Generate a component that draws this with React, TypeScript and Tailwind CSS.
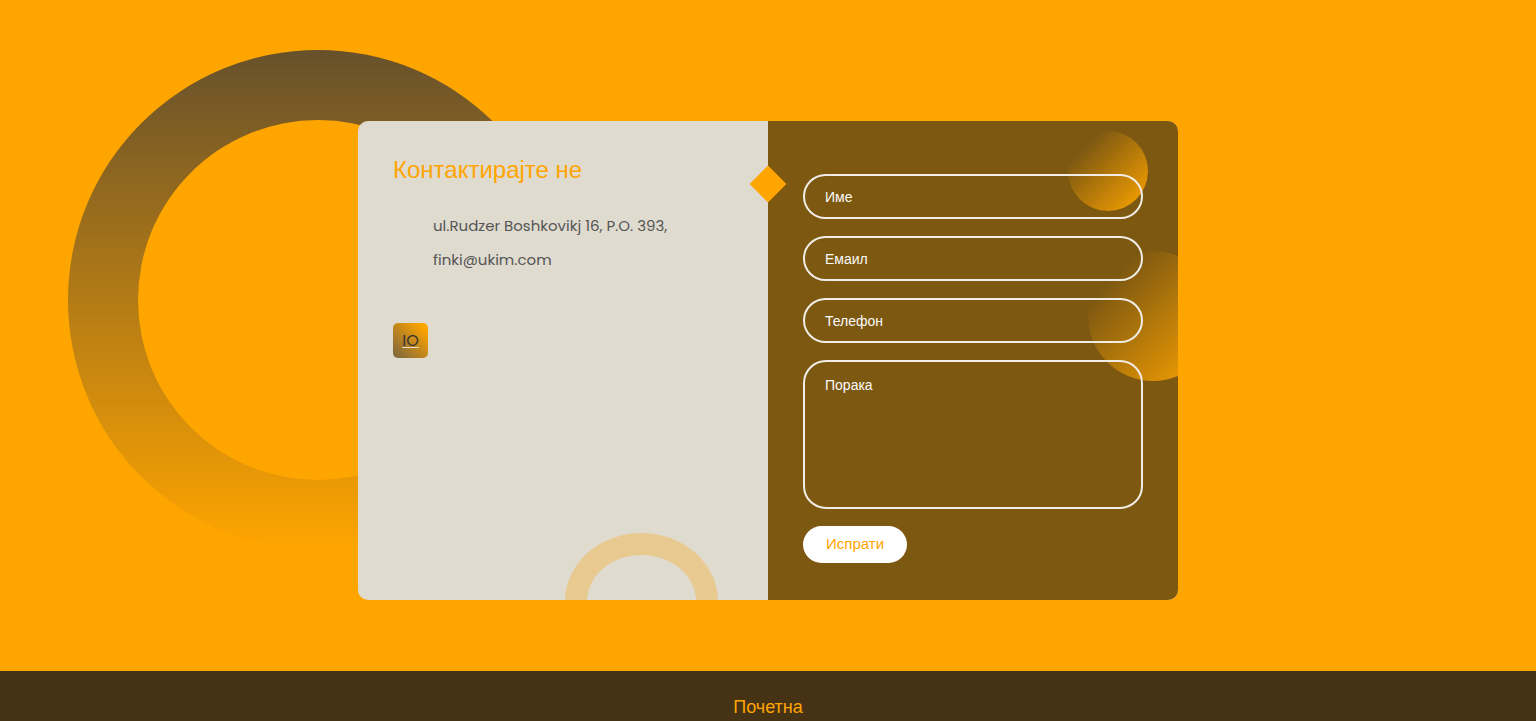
import type { ReactNode } from 'react';

const fieldClass =
  "peer block w-full rounded-[23px] border-2 border-[#f1ede6] bg-transparent px-5 font-['Liberation_Sans',sans-serif] text-sm text-white outline-none";

const labelClass =
  "pointer-events-none absolute left-[22px] font-['Liberation_Sans',sans-serif] text-sm leading-5 text-[#fafafa] peer-focus:opacity-0 peer-not-placeholder-shown:opacity-0";

function Field({ id, label, type }: { id: string; label: string; type: string }) {
  return (
    <div className="relative flex items-center">
      <input id={id} name={id} type={type} placeholder=" " className={`${fieldClass} h-[45px]`} />
      <label htmlFor={id} className={labelClass}>{label}</label>
    </div>
  );
}

function InfoLine({ children }: { children: ReactNode }) {
  return <p className="pl-10 text-[15px] leading-[34px] text-[#555]">{children}</p>;
}

function ContactInfo() {
  return (
    <section className="relative overflow-hidden px-[35px] pt-8">
      <div className="absolute -bottom-[70px] right-[50px] h-[137px] w-[153px] rounded-[50%] border-[22px] border-[#e8ca91]" />
      <h1 className="font-['Liberation_Sans',sans-serif] text-2xl leading-[34px] text-[#ffa500]">
        Контактирајте не
      </h1>
      <div className="mt-[22px]">
        <InfoLine>ul.Rudzer Boshkovikj 16, P.O. 393,</InfoLine>
        <InfoLine>finki@ukim.com</InfoLine>
      </div>
      <a
        href="#io"
        className="mt-[46px] flex size-[35px] items-center justify-center rounded-[5px] bg-linear-[45deg,#79643f,#ffa500_90%] text-base leading-[35px] text-[#333] underline decoration-[#dfdbcf] decoration-1 underline-offset-1 [text-decoration-skip-ink:none]"
      >
        IO
      </a>
    </section>
  );
}

function ContactForm() {
  return (
    <section className="relative bg-[#7d5811]">
      <div className="absolute inset-0 overflow-hidden rounded-r-[10px]">
        <div className="absolute right-[30px] top-[10px] size-20 rounded-full bg-linear-[135deg,transparent_20%,#ffa500]" />
        <div className="absolute -right-10 top-[130px] size-[130px] rounded-full bg-linear-[135deg,transparent_20%,#ffa500]" />
      </div>
      <div className="absolute -left-[13px] top-[50px] size-[26px] rotate-45 bg-[#ffa500]" />
      <form
        className="relative flex flex-col gap-[17px] px-[35px] pb-[37px] pt-[53px]"
        onSubmit={(event) => event.preventDefault()}
      >
        <Field id="name" label="Име" type="text" />
        <Field id="email" label="Емаил" type="email" />
        <Field id="phone" label="Телефон" type="tel" />
        <div className="relative">
          <textarea
            id="message"
            name="message"
            placeholder=" "
            className={`${fieldClass} h-[149px] resize-none pt-[13px]`}
          />
          <label htmlFor="message" className={`${labelClass} top-[15px]`}>Порака</label>
        </div>
        <button
          type="submit"
          className="h-[37px] self-start rounded-full bg-white px-[23px] font-['Liberation_Sans',sans-serif] text-[15px] text-[#ffa500]"
        >
          Испрати
        </button>
      </form>
    </section>
  );
}

export default function App() {
  return (
    <div className="flex min-h-screen flex-col bg-[#ffa500] font-[Poppins,Inter,sans-serif]">
      <main className="relative flex flex-1 items-center justify-center overflow-hidden px-8 pt-[50px]">
        <div className="absolute left-1/2 top-[50px] size-[500px] -translate-x-[700px] rounded-full bg-linear-[180deg,#67512b,#ffa500] p-[70px]">
          <div className="size-full rounded-full bg-[#ffa500]" />
        </div>
        <div className="relative grid w-full max-w-[820px] grid-cols-2 overflow-hidden rounded-[10px] bg-[#dfdbcf]">
          <ContactInfo />
          <ContactForm />
        </div>
      </main>
      <footer className="flex h-[50px] items-end justify-center bg-[#463215]">
        <a href="#home" className="font-['Liberation_Sans',sans-serif] text-lg leading-7 text-[#ffa500]">
          Почетна
        </a>
      </footer>
    </div>
  );
}
